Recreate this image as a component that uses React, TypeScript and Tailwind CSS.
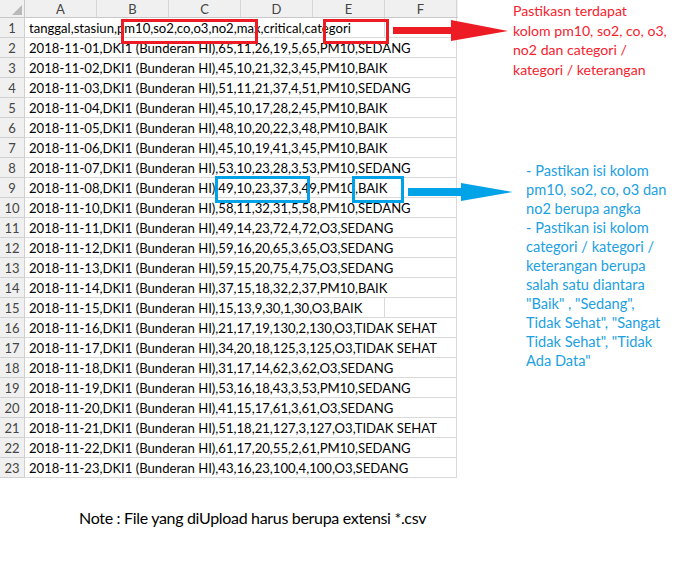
import React from "react";

// ------------------ Data ------------------

const station = "DKI1 (Bunderan HI)";

const rows: string[] = [
  "tanggal,stasiun,pm10,so2,co,o3,no2,max,critical,categori",
  `2018-11-01,${station},65,11,26,19,5,65,PM10,SEDANG`,
  `2018-11-02,${station},45,10,21,32,3,45,PM10,BAIK`,
  `2018-11-03,${station},51,11,21,37,4,51,PM10,SEDANG`,
  `2018-11-04,${station},45,10,17,28,2,45,PM10,BAIK`,
  `2018-11-05,${station},48,10,20,22,3,48,PM10,BAIK`,
  `2018-11-06,${station},45,10,19,41,3,45,PM10,BAIK`,
  `2018-11-07,${station},53,10,23,28,3,53,PM10,SEDANG`,
  `2018-11-08,${station},49,10,23,37,3,49,PM10,BAIK`,
  `2018-11-10,${station},58,11,32,31,5,58,PM10,SEDANG`,
  `2018-11-11,${station},49,14,23,72,4,72,O3,SEDANG`,
  `2018-11-12,${station},59,16,20,65,3,65,O3,SEDANG`,
  `2018-11-13,${station},59,15,20,75,4,75,O3,SEDANG`,
  `2018-11-14,${station},37,15,18,32,2,37,PM10,BAIK`,
  `2018-11-15,${station},15,13,9,30,1,30,O3,BAIK`,
  `2018-11-16,${station},21,17,19,130,2,130,O3,TIDAK SEHAT`,
  `2018-11-17,${station},34,20,18,125,3,125,O3,TIDAK SEHAT`,
  `2018-11-18,${station},31,17,14,62,3,62,O3,SEDANG`,
  `2018-11-19,${station},53,16,18,43,3,53,PM10,SEDANG`,
  `2018-11-20,${station},41,15,17,61,3,61,O3,SEDANG`,
  `2018-11-21,${station},51,18,21,127,3,127,O3,TIDAK SEHAT`,
  `2018-11-22,${station},61,17,20,55,2,61,PM10,SEDANG`,
  `2018-11-23,${station},43,16,23,100,4,100,O3,SEDANG`,
];

const cols = ["A", "B", "C", "D", "E", "F"];

const redNotes = [
  "Pastikasn terdapat",
  "kolom pm10, so2, co, o3,",
  "no2 dan categori /",
  "kategori / keterangan",
];

const blueNotes = [
  "- Pastikan isi kolom",
  "pm10, so2, co, o3 dan",
  "no2 berupa angka",
  "- Pastikan isi kolom",
  "categori / kategori /",
  "keterangan berupa",
  "salah satu diantara",
  "\"Baik\" , \"Sedang\",",
  "Tidak Sehat\", \"Sangat",
  "Tidak Sehat\", \"Tidak",
  "Ada Data\"",
];

// ------------------ Sheet ------------------

const Sheet: React.FC = () => {
  return (
    <div className="relative w-[458px] shrink-0">
      {/* column header */}
      <div className="flex h-[18px] bg-[#f0f0f0] border-b border-[#c8c8c8]">
        <div className="relative w-[25px] border-r border-[#c8c8c8]">
          <div className="absolute right-[2px] bottom-[2px] w-0 h-0 border-l-[10px] border-l-transparent border-b-[10px] border-b-[#b9b9b9]" />
        </div>
        {cols.map((c) => (
          <div
            key={c}
            className="w-[72px] border-r border-[#d6d6d6] text-center text-[13px] leading-[18px] text-[#444]"
          >
            {c}
          </div>
        ))}
      </div>

      {/* rows */}
      {rows.map((text, i) => (
        <div key={i} className="relative flex h-[20px]">
          <div className="w-[25px] bg-[#f0f0f0] border-r border-b border-[#d0d0d0] text-center text-[13px] leading-[20px] text-[#444]">
            {i + 1}
          </div>
          {cols.map((c) => (
            <div key={c} className="w-[72px] border-r border-b border-[#d9d9d9]" />
          ))}
          <span className="absolute left-[26px] top-0 h-[19px] bg-white pl-[3px] pr-[4px] whitespace-nowrap text-[13.1px] leading-[20px] text-black">
            {text}
          </span>
        </div>
      ))}

      {/* highlight boxes */}
      <div className="absolute left-[121px] top-[19px] w-[137px] h-[25px] border-[3px] border-[#ed1c24]" />
      <div className="absolute left-[323px] top-[19px] w-[66px] h-[25px] border-[3px] border-[#ed1c24]" />
      <div className="absolute left-[215px] top-[176px] w-[95px] h-[27px] border-[3px] border-[#00a2e8]" />
      <div className="absolute left-[352px] top-[176px] w-[52px] h-[27px] border-[3px] border-[#00a2e8]" />
    </div>
  );
};

// ------------------ Arrows ------------------

const RedArrow: React.FC = () => (
  <svg className="absolute left-[393px] top-[20px]" width="116" height="22" viewBox="0 0 116 22">
    <rect x="0" y="7" width="60" height="7" fill="#ed1c24" />
    <path d="M58 0 L115 11 L58 21 Z" fill="#ed1c24" />
  </svg>
);

const BlueArrow: React.FC = () => (
  <svg className="absolute left-[408px] top-[182px]" width="106" height="20" viewBox="0 0 106 20">
    <rect x="0" y="6" width="55" height="8" fill="#00a2e8" />
    <path d="M53 1 L105 10 L53 19 Z" fill="#00a2e8" />
  </svg>
);

// ------------------ App ------------------

export default function App() {
  return (
    <div className="relative w-[683px] h-[581px] bg-white overflow-hidden font-['Lato',sans-serif]">
      <div className="flex">
        <Sheet />
        <div className="flex flex-col gap-[82px] pt-[1px]">
          <div className="pl-[55px] text-[14.1px] leading-[19.5px] text-[#f5222d]">
            {redNotes.map((line, i) => (
              <p key={i} className="whitespace-nowrap">{line}</p>
            ))}
          </div>
          <div className="pl-[68px] text-[14.6px] leading-[19px] text-[#1ba1e2]">
            {blueNotes.map((line, i) => (
              <p key={i} className="whitespace-nowrap">{line}</p>
            ))}
          </div>
        </div>
      </div>

      <p className="mt-[28px] pl-[79px] text-[16px] leading-[24px] tracking-[-0.02em] text-black">
        Note : File yang diUpload harus berupa extensi *.csv
      </p>

      <RedArrow />
      <BlueArrow />
    </div>
  );
}
